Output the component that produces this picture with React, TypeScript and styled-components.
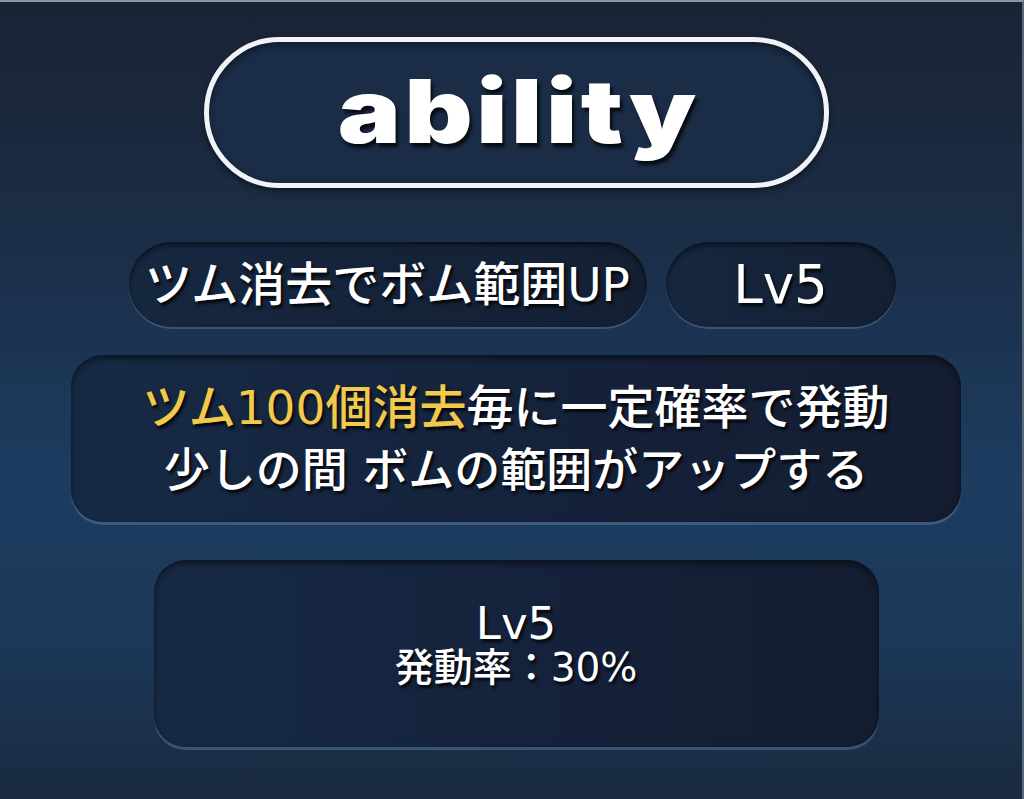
import React from 'react'
import styled, { createGlobalStyle } from 'styled-components'

const GlobalStyle = createGlobalStyle`
  html, body {
    margin: 0;
    padding: 0;
  }
  body {
    font-family: 'DejaVu Sans', 'Noto Sans CJK JP', sans-serif;
    background: #1b2a40;
  }
`

const Page = styled.div`
  box-sizing: border-box;
  width: 1024px;
  height: 799px;
  padding: 35px 0 0 10px;
  display: flex;
  flex-direction: column;
  align-items: center;
  border-top: 2px solid #8d96a3;
  border-right: 2px solid #5c6878;
  background: linear-gradient(
    to bottom,
    #1a2334 0%,
    #1b2d46 28%,
    #1d3c60 60%,
    #1c3858 80%,
    #1a2a40 100%
  );
`

const TitlePill = styled.div`
  box-sizing: border-box;
  width: 625px;
  height: 151px;
  margin-bottom: 54px;
  border: 5px solid #f1f3f6;
  border-radius: 76px;
  background: #1a2c46;
  display: flex;
  align-items: center;
  justify-content: center;
  box-shadow: 0 3px 6px rgba(0, 0, 0, 0.5), inset 0 3px 6px rgba(0, 0, 0, 0.45);
`

const TitleText = styled.div`
  font-family: Inter, 'Liberation Sans', sans-serif;
  font-weight: 900;
  font-size: 88px;
  line-height: 1;
  letter-spacing: 3px;
  color: #ffffff;
  transform: scaleX(1.2);
  margin: -4px 0 0 6px;
  text-shadow: 2px 4px 3px rgba(0, 0, 0, 0.75);
`

const Row = styled.div`
  display: flex;
  gap: 19px;
  margin-bottom: 28px;
  margin-left: -8px;
`

const Pill = styled.div<{ $width: number }>`
  box-sizing: border-box;
  width: ${({ $width }) => $width}px;
  height: 85px;
  border-radius: 43px;
  background: linear-gradient(to right, #162740, #141f33);
  display: flex;
  align-items: center;
  justify-content: center;
  box-shadow: inset 0 3px 5px rgba(0, 0, 0, 0.55), 0 2px 0 rgba(120, 150, 190, 0.35);
`

const PillText = styled.span<{ $size: number }>`
  font-size: ${({ $size }) => $size}px;
  font-weight: 500;
  line-height: 1;
  color: #ffffff;
  white-space: nowrap;
  text-shadow: 2px 3px 3px rgba(0, 0, 0, 0.8);
`

const Panel = styled.div<{ $width: number; $height: number; $lift: number }>`
  box-sizing: border-box;
  width: ${({ $width }) => $width}px;
  height: ${({ $height }) => $height}px;
  padding-bottom: ${({ $lift }) => $lift}px;
  border-radius: 32px;
  background: linear-gradient(to right, #172a45, #15213a 60%, #141d30);
  display: flex;
  flex-direction: column;
  align-items: center;
  justify-content: center;
  box-shadow: inset 0 3px 6px rgba(0, 0, 0, 0.55), 0 3px 0 rgba(110, 140, 180, 0.4);
`

const Line = styled.div<{ $size: number; $lh: number }>`
  font-size: ${({ $size }) => $size}px;
  font-weight: 500;
  line-height: ${({ $lh }) => $lh}px;
  color: #ffffff;
  white-space: nowrap;
  text-shadow: 2px 3px 3px rgba(0, 0, 0, 0.8);
`

const Highlight = styled.span`
  color: #f2c94a;
`

const Spacer = styled.div`
  height: 38px;
`

export default function App() {
  return (
    <>
      <GlobalStyle />
      <Page>
        <TitlePill>
          <TitleText>ability</TitleText>
        </TitlePill>
        <Row>
          <Pill $width={518}>
            <PillText $size={47}>ツム消去でボム範囲UP</PillText>
          </Pill>
          <Pill $width={230}>
            <PillText $size={53}>Lv5</PillText>
          </Pill>
        </Row>
        <Panel $width={890} $height={167} $lift={0}>
          <Line $size={47} $lh={62}>
            <Highlight>ツム100個消去</Highlight>毎に一定確率で発動
          </Line>
          <Line $size={46} $lh={62}>少しの間 ボムの範囲がアップする</Line>
        </Panel>
        <Spacer />
        <Panel $width={725} $height={187} $lift={16}>
          <Line $size={45} $lh={44}>Lv5</Line>
          <Line $size={39} $lh={44}>発動率：30%</Line>
        </Panel>
      </Page>
    </>
  )
}
